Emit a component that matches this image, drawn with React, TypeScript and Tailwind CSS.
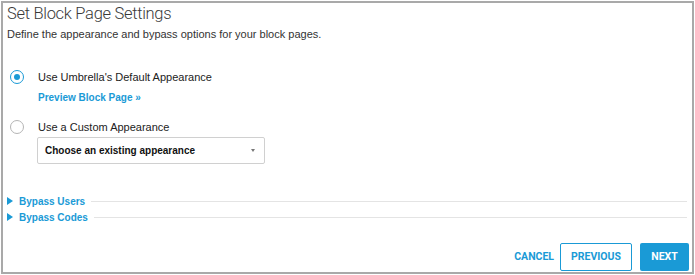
import React, { useState } from 'react';

const blue = 'text-[#1a9ad6]';

function Radio({ checked }: { checked: boolean }) {
  return (
    <span
      className={
        'flex h-[14px] w-[14px] items-center justify-center rounded-full border-[1.5px] ' +
        (checked ? 'border-[#1a9ad6]' : 'border-[#b5b5b5]')
      }
    >
      {checked && <span className="h-[6px] w-[6px] rounded-full bg-[#1a9ad6]" />}
    </span>
  );
}

function Section({ label }: { label: string }) {
  return (
    <div className="flex h-4 items-center">
      <span className="mr-[6px] h-0 w-0 border-y-[4px] border-l-[6px] border-y-transparent border-l-[#1a9ad6]" />
      <span className={'text-[10px] font-bold ' + blue}>{label}</span>
      <span className="ml-[6px] mt-[1px] h-px flex-1 bg-[#e4e4e4]" />
    </div>
  );
}

export default function App() {
  const [choice, setChoice] = useState('default');

  return (
    <div className="h-[275px] w-[695px] bg-white p-[1px] font-['Liberation_Sans',Arial,sans-serif] text-[#333]">
      <div className="flex h-full flex-col border-2 border-[#a9a9a9] pl-[4px] pr-[3px]">
        <h1 className="text-[16.5px] font-light leading-[22px] tracking-[-0.3px] text-[#3a3a3a] font-['Roboto',sans-serif]">
          Set Block Page Settings
        </h1>
        <p className="mt-[1px] text-[11px] leading-[16px] text-[#333]">
          Define the appearance and bypass options for your block pages.
        </p>

        <div className="mt-[27px] flex flex-col pl-[3px]">
          <button className="flex items-center text-left" onClick={() => setChoice('default')}>
            <Radio checked={choice === 'default'} />
            <span className="ml-[14px] text-[11px] leading-[16px] text-[#222]">Use Umbrella's Default Appearance</span>
          </button>
          <span className={'ml-[28px] mt-[5px] text-[10px] font-bold leading-[16px] ' + blue}>Preview Block Page »</span>

          <button className="mt-[13px] flex items-center text-left" onClick={() => setChoice('custom')}>
            <Radio checked={choice === 'custom'} />
            <span className="ml-[14px] text-[11px] leading-[16px] text-[#222]">Use a Custom Appearance</span>
          </button>
          <div className="ml-[27px] mt-[2px] flex h-[27px] w-[228px] items-center justify-between rounded-[2px] border border-[#d0d0d0] pl-[7px] pr-[9px]">
            <span className="text-[10px] font-bold text-[#111]">Choose an existing appearance</span>
            <span className="h-0 w-0 border-x-[2px] border-t-[3px] border-x-transparent border-t-[#777]" />
          </div>
        </div>

        <div className="mt-[29px] flex flex-col pr-[2px]">
          <Section label="Bypass Users" />
          <Section label="Bypass Codes" />
        </div>

        <div className="mt-auto mb-[1px] flex items-center justify-end gap-[8px] font-['Roboto',sans-serif]">
          <span className={'mr-[-2px] text-[10.5px] font-bold ' + blue}>CANCEL</span>
          <button className="flex h-[28px] w-[72px] items-center justify-center rounded-[2px] border border-[#1a9ad6] text-[10.5px] font-bold text-[#1a9ad6]">
            PREVIOUS
          </button>
          <button className="flex h-[28px] w-[49px] items-center justify-center rounded-[2px] bg-[#1a9ad6] text-[10.5px] font-bold text-white">
            NEXT
          </button>
        </div>
      </div>
    </div>
  );
}
